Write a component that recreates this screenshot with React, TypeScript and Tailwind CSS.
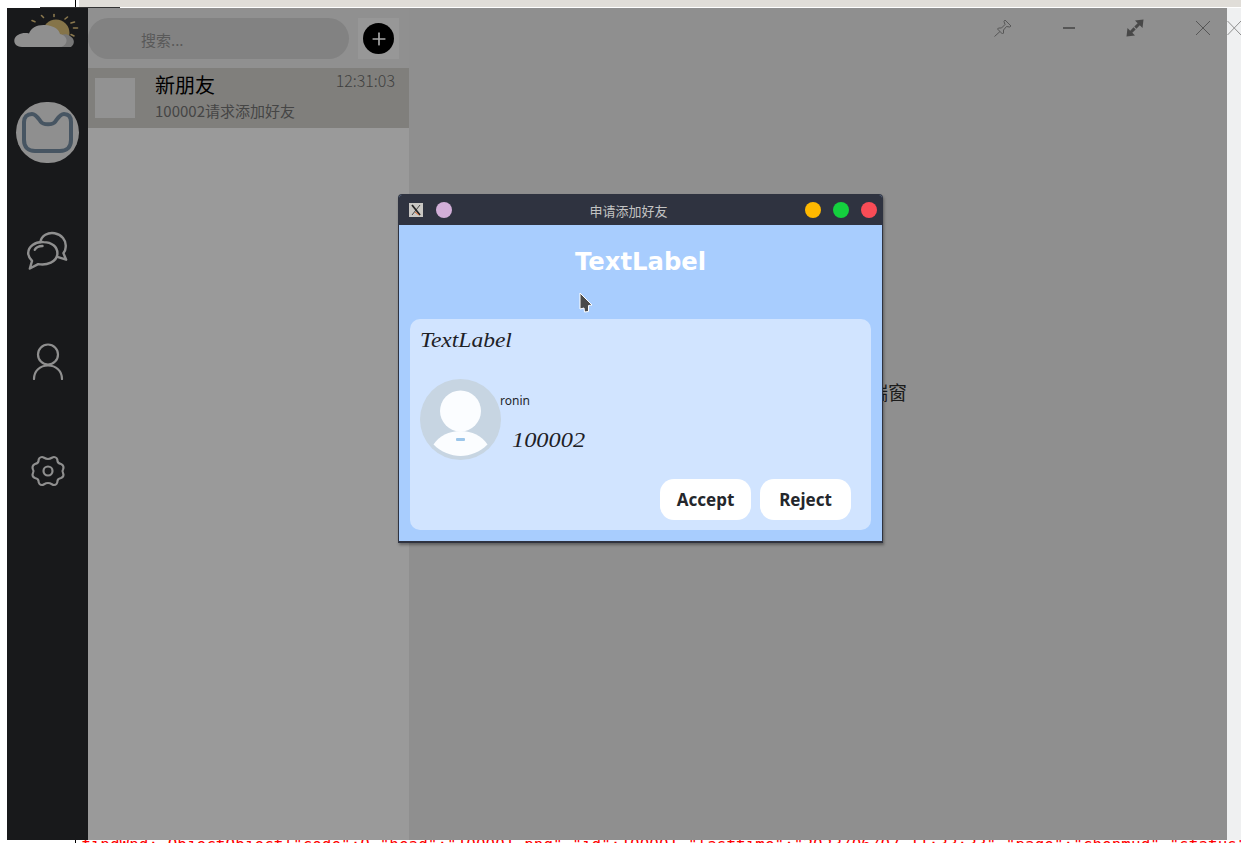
import React from "react";
import { Plus } from "lucide-react";

function Weather() {
  return (
    <svg width="70" height="40" viewBox="0 0 70 40" className="block">
      <g stroke="#8a784e" strokeWidth="1.600" strokeLinecap="round">
        <path d="M22 8.500l3 1.200" />
        <path d="M31.500 3.500l2 2" />
        <path d="M44 2.500v2" />
        <path d="M57.500 5l-2.500 2" />
        <path d="M64.500 10l-3.500 1" />
        <path d="M67.500 16h-4" />
        <path d="M64 24l-3-1.500" />
      </g>
      <circle cx="46" cy="21" r="13.500" fill="#857449" />
      <path d="M48 35 L61 35 C65 32 65 27 60 24 C56 21 52 22 48 25 Z" fill="#777777" />
      <path d="M12 35 C6 35 3.500 31 4.500 27 C6 23 12 20 19 21.500 C21 16 27 12.500 35 13 C43 13.500 49 17 50 22 C55 23 58 27 56 31 C55 33 53 35 49 35 Z" fill="#8f8f8f" />
    </svg>
  );
}

function Bubbles() {
  return (
    <svg width="44" height="44" viewBox="0 0 40 40" fill="none" stroke="#8f8f8f" strokeWidth="2.200" strokeLinecap="round" strokeLinejoin="round" className="block">
      <path d="M13 11 C14 5 20 2 26 3 C32 4 37 9 36 16 C36 18 35 20 34 21 L36.500 27 L28.500 24.500" />
      <path d="M16 11 C8 10.500 2 15 2 21 C2 24 3.500 26 5.500 28 L3.500 35 L11 31 C19 32.500 28 29 28.500 22 C29 15 23 11 16 11 Z" />
      <path d="M8 18 C9 16 12 14.500 15 14.500" />
    </svg>
  );
}

function UserIcon() {
  return (
    <svg width="32" height="38" viewBox="0 0 32 38" fill="none" stroke="#8f8f8f" strokeWidth="2.200" strokeLinecap="round" className="block">
      <circle cx="16" cy="12.500" r="10" />
      <path d="M2 37 C2 29 8 23.500 16 23.500 C24 23.500 30 29 30 37" />
    </svg>
  );
}

function Gear() {
  return (
    <svg width="34" height="32" viewBox="0 0 34 32" fill="none" stroke="#8f8f8f" strokeWidth="2.200" strokeLinejoin="round" className="block">
      <path d="M11 2 C13 2 13.500 4 17 4 C20.500 4 21 2 23 2 C25 2 26.500 4 26.500 6 C26.500 8 28 8.500 30 9 C32.500 10 33 12.500 32 14.500 C31 16 31 16.500 32 18 C33 20 32.500 22 30 23 C28 23.500 26.500 24 26.500 26 C26.500 28 25 30 23 30 C21 30 20.500 28 17 28 C13.500 28 13 30 11 30 C9 30 7.500 28 7.500 26 C7.500 24 6 23.500 4 23 C1.500 22 1 20 2 18 C3 16.500 3 16 2 14.500 C1 12.500 1.500 10 4 9 C6 8.500 7.500 8 7.500 6 C7.500 4 9 2 11 2 Z" />
      <circle cx="17" cy="16" r="4.500" />
    </svg>
  );
}

function Expand() {
  return (
    <svg width="18" height="18" viewBox="0 0 18 18" fill="#484848" className="block">
      <path d="M17.500 0.500 L16.500 9 L13.800 6.300 L10.400 9.700 L8.300 7.600 L11.700 4.200 L9 1.500 Z" />
      <path d="M0.500 17.500 L1.500 9 L4.200 11.700 L7.600 8.300 L9.700 10.400 L6.300 13.800 L9 16.500 Z" />
    </svg>
  );
}

function PinIcon() {
  return (
    <svg width="18" height="18" viewBox="0 0 18 18" fill="none" stroke="#565656" strokeWidth="1" className="block">
      <path d="M11 1 L17 7 L15.500 8 L12.500 7.500 L9.500 11 L9.500 14 L8.500 15 L3.500 10 L4.500 9 L7.500 9 L11 5.500 L10 2.500 Z" />
      <path d="M6 12.500 L0.500 17.500" />
    </svg>
  );
}

function Avatar() {
  return (
    <svg width="81" height="81" viewBox="0 0 81 81" className="block shrink-0">
      <circle cx="40.500" cy="40.500" r="40.500" fill="#c7d5e2" />
      <circle cx="40.500" cy="32" r="20.500" fill="#fbfdff" />
      <path d="M13.500 65.500 C19 57 29 52 40.500 52 C52 52 62 57 67.500 65.500 C60 73 50 77 40.500 77 C31 77 21 73 13.500 65.500 Z" fill="#fbfdff" />
      <rect x="36" y="59" width="9" height="3" rx="1" fill="#9cc6ea" />
    </svg>
  );
}

function XLogo() {
  return (
    <svg width="14" height="14" viewBox="0 0 14 14" className="block shrink-0">
      <rect width="14" height="14" fill="#c9c7c3" />
      <path d="M3 2 L11 12" stroke="#222" strokeWidth="1.800" />
      <path d="M11 2 L3 12" stroke="#222" strokeWidth="0.800" />
      <path d="M6 9 L10 12" stroke="#d9682e" strokeWidth="1" />
    </svg>
  );
}

function Dot({ className }: { className: string }) {
  return <div className={`h-4 w-4 rounded-full ${className}`} />;
}

export default function App() {
  return (
    <div className="relative flex h-[843px] w-[1241px] flex-col overflow-hidden bg-white [font-family:'Noto_Sans_CJK_SC','Noto_Sans',sans-serif]">
      <div className="flex h-[7px] shrink-0">
        <div className="w-[75px]" />
        <div className="w-px bg-black" />
        <div className="w-[3px]" />
        <div className="flex-1 bg-[#e0ddd8]" />
      </div>
      <div className="h-px shrink-0">
        <div className="ml-[40px] h-px w-[80px] bg-[#333333]" />
      </div>

      <div className="flex h-[832px] shrink-0">
        <div className="w-[7px] shrink-0" />
        <div className="flex w-[1220px] shrink-0">
          <aside className="flex w-[81px] shrink-0 flex-col items-center bg-[#18191b]">
            <div className="mt-[4px] h-[40px] w-[70px] -translate-x-[3px]">
              <Weather />
            </div>
            <div className="mt-[50px] flex h-[61px] w-[63px] items-center justify-center rounded-full bg-[#8f8f8f]">
              <svg width="55" height="45" viewBox="0 0 55 45" fill="none" stroke="#475562" strokeWidth="4" strokeLinecap="round" strokeLinejoin="round" className="block">
                <path d="M12 4 C16 4 18 8 21 12 C23 15 33 15 35 12 C38 8 40 4 44 4 C49 4 51 7 51 12 L51 30 C51 37 47 41 40 41 L15 41 C8 41 4 37 4 30 L4 12 C4 7 7 4 12 4 Z" />
              </svg>
            </div>
            <div className="mt-[67px]">
              <Bubbles />
            </div>
            <div className="mt-[68px]">
              <UserIcon />
            </div>
            <div className="mt-[75px]">
              <Gear />
            </div>
          </aside>

          <section className="flex w-[321px] shrink-0 flex-col bg-[#9a9a9a]">
            <div className="flex h-[60px] shrink-0 items-start bg-[#909090] pt-[10px]">
              <div className="flex h-[41px] w-[261px] items-center rounded-full bg-[#828282] pl-[53px] pt-[3px] text-[15px] text-[#595959]">
                搜索...
              </div>
              <div className="ml-[9px] flex h-[41px] w-[41px] items-center justify-center bg-[#979797]">
                <div className="flex h-[31px] w-[31px] items-center justify-center rounded-full bg-black text-[#a8a8a8]">
                  <Plus size={20} strokeWidth={2} />
                </div>
              </div>
            </div>
            <div className="flex h-[60px] shrink-0 bg-[#807f7c] pl-[7px] pt-[10px]">
              <div className="h-10 w-10 shrink-0 bg-[#929292]" />
              <div className="ml-[20px] flex flex-1 flex-col">
                <div className="-mt-[7px] text-[20px] leading-[28px] text-black">新朋友</div>
                <div className="mt-[1px] text-[15px] leading-[22px] text-[#454545]">100002请求添加好友</div>
              </div>
              <div className="-mt-[8px] mr-[14px] text-[16px] font-light leading-[20px] text-[#3f3f3f]">12:31:03</div>
            </div>
          </section>

          <main className="flex flex-1 flex-col bg-[#8f8f8f]">
            <div className="flex h-[40px] shrink-0 items-center">
              <div className="ml-[585px]"><PinIcon /></div>
              <div className="ml-[51px] h-[2px] w-[12px] bg-[#565656]" />
              <div className="ml-[51px]"><Expand /></div>
              <div className="ml-[51px]">
                <svg width="16" height="16" viewBox="0 0 16 16" stroke="#565656" strokeWidth="1" className="block"><path d="M1 1 L15 15 M15 1 L1 15" /></svg>
              </div>
            </div>
            <div className="flex flex-1 items-center justify-end pb-[104px] pr-[320px] text-[19px] text-[#1c1c1c]">端窗</div>
          </main>
        </div>
        <div className="flex w-[14px] shrink-0 flex-col bg-[#eff0f1] pt-[12px]">
          <svg width="14" height="16" viewBox="0 0 14 16" stroke="#8f8f8f" strokeWidth="1" className="block"><path d="M0.500 1 L14 15 M14 1 L0.500 15" /></svg>
        </div>
      </div>

      <div className="h-[3px] shrink-0 overflow-hidden pl-[75px]">
        <div className="-mt-[5px] whitespace-nowrap border-l border-black pl-[5px] text-[16px] leading-[20px] text-[#f00] [font-family:'DejaVu_Sans_Mono',monospace]">
          findWnd: ObjectObject{'{'}"code":0,"head":"100001.png","id":100001,"lasttime":"2023/06/07 11:33:33","page":"chenmud","status":"
        </div>
      </div>

      <div className="absolute left-[398px] top-[194px] flex h-[349px] w-[485px] flex-col overflow-hidden rounded-t-[4px] border border-b-2 border-[#2f3340] bg-[#a8cdfe] shadow-[1px_2px_3px_rgba(0,0,0,0.35)]">
        <div className="flex h-[30px] shrink-0 items-center bg-[#2f3340] pl-[10px] pr-[5px]">
          <XLogo />
          <Dot className="ml-[13px] bg-[#d2afd8]" />
          <div className="flex-1 pt-[1px] text-center text-[13px] text-[#c3c3c3]">申请添加好友</div>
          <div className="flex gap-[12px]">
            <Dot className="bg-[#ffb900]" />
            <Dot className="bg-[#14d03e]" />
            <Dot className="bg-[#f94c56]" />
          </div>
        </div>
        <div className="relative flex h-[94px] shrink-0 justify-center pt-[19px]">
          <div className="text-[24.300px] font-bold leading-[36px] text-white [font-family:'DejaVu_Sans',sans-serif]">TextLabel</div>
          <svg width="14" height="22" viewBox="0 0 14 22" className="absolute left-[180px] top-[67px]">
            <path d="M1 1 L13 13 L9.500 13.500 L9.500 19.500 L5.500 20 L5 16 L1 17 Z" fill="#4a4a4a" stroke="#fff" strokeWidth="1" />
          </svg>
        </div>
        <div className="ml-[11px] flex h-[211px] w-[461px] flex-col rounded-[10px] bg-[#d1e4ff] px-[10px]">
          <div className="w-fit origin-left scale-x-[1.120] pt-[6px] text-[21px] italic leading-[30px] text-[#1e2126] [font-family:'Liberation_Serif',serif]">TextLabel</div>
          <div className="mt-[24px] flex">
            <Avatar />
            <div className="flex flex-col">
              <div className="-ml-px mt-[13px] text-[12px] leading-[18px] text-[#24272c] [font-family:'Noto_Sans',sans-serif]">ronin</div>
              <div className="ml-[11px] mt-[16px] w-fit origin-left scale-x-[1.160] text-[21px] italic leading-[28px] text-[#1e2126] [font-family:'Liberation_Serif',serif]">100002</div>
            </div>
          </div>
          <div className="mt-[19px] flex justify-end gap-[9px] pr-[10px]">
            <button className="h-[41px] w-[91px] rounded-[14px] bg-white text-[17px] font-bold text-[#24272c] [font-family:'Noto_Sans',sans-serif]">Accept</button>
            <button className="h-[41px] w-[91px] rounded-[14px] bg-white text-[17px] font-bold text-[#24272c] [font-family:'Noto_Sans',sans-serif]">Reject</button>
          </div>
        </div>
      </div>
    </div>
  );
}
